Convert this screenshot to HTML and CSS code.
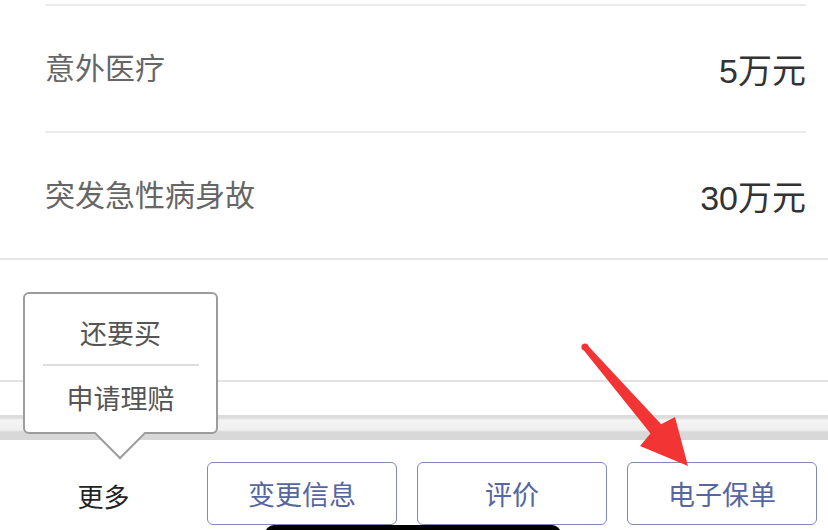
FILE: index.html
```html
<!DOCTYPE html>
<html lang="zh-CN">
<head>
<meta charset="utf-8">
<link rel="stylesheet" href="styles.css">
</head>
<body>
<div class="page">
  <section class="list">
    <div class="row">
      <span class="label">意外医疗</span>
      <span class="value">5万元</span>
    </div>
    <div class="row">
      <span class="label">突发急性病身故</span>
      <span class="value">30万元</span>
    </div>
  </section>
  <div class="blank"></div>
  <div class="blank2"></div>
  <div class="band"></div>
  <footer class="bar">
    <div class="more">更多</div>
    <div class="buttons">
      <button class="btn">变更信息</button>
      <button class="btn">评价</button>
      <button class="btn">电子保单</button>
    </div>
  </footer>

  <div class="popup">
    <div class="pop-item first">还要买</div>
    <div class="pop-divider"></div>
    <div class="pop-item second">申请理赔</div>
    <div class="pop-arrow"></div>
  </div>

  <div class="home"></div>

  <svg class="red-arrow" width="828" height="530" viewBox="0 0 828 530">
    <circle cx="585" cy="347" r="3.6" fill="#f23434"/>
    <polygon points="587.3,345 661.2,424.3 675,417 688,466 640,446 650.5,433.5 582.7,349" fill="#f23434"/>
  </svg>
</div>
</body>
</html>
```

FILE: styles.css
```css
* { box-sizing: border-box; }
html, body { margin: 0; padding: 0; background: #fff; }
body {
  width: 828px;
  height: 530px;
  overflow: hidden;
  font-family: "Noto Sans CJK SC", "Noto Sans", sans-serif;
}
.page {
  position: relative;
  width: 828px;
  height: 530px;
  display: flex;
  flex-direction: column;
}
.list {
  padding-top: 4px;
  border-bottom: 2px solid #e6e6e6;
}
.row {
  margin: 0 22px 0 45px;
  height: 127px;
  border-top: 2px solid #ebebeb;
  display: flex;
  align-items: center;
  justify-content: space-between;
}
.label {
  font-size: 30px;
  color: #666;
  margin-top: -6px;
}
.value {
  font-family: "Liberation Sans", "Noto Sans CJK SC", sans-serif;
  font-size: 34px;
  color: #333;
  margin-top: 0;
}
.blank {
  height: 122px;
  border-bottom: 2px solid #e2e2e2;
}
.blank2 { height: 33px; }
.band {
  height: 25px;
  background: linear-gradient(#dcdcdc 0, #dcdcdc 3px, #f4f4f4 5px, #efefef 15px, #d8d8d8 17px, #d8d8d8 25px);
}
.bar {
  flex: 1;
  display: flex;
  padding-top: 22px;
}
.more {
  width: 207px;
  text-align: center;
  font-size: 26px;
  color: #222;
  line-height: 63px;
  padding-top: 2px;
}
.buttons {
  display: flex;
  gap: 20px;
}
.btn {
  width: 190px;
  height: 63px;
  background: #fff;
  border: 1.5px solid #7d8ab6;
  border-radius: 6px;
  font-family: "Noto Sans CJK SC", sans-serif;
  font-size: 27px;
  color: #5566a0;
  padding: 0;
}
.popup {
  position: absolute;
  left: 23px;
  top: 292px;
  width: 195px;
  height: 142px;
  border: 2px solid #9c9c9c;
  border-radius: 6px;
  background: #fff;
  padding-top: 6px;
}
.pop-item {
  text-align: center;
  font-size: 27px;
  color: #555;
  display: flex;
  align-items: center;
  justify-content: center;
}
.pop-item.first { height: 64px; }
.pop-item.second { height: 62px; }
.pop-divider {
  height: 2px;
  margin: 0 17px 0 18px;
  background: #dedede;
}
.pop-arrow {
  position: absolute;
  left: 77px;
  bottom: -20px;
  width: 36px;
  height: 36px;
  background: #fff;
  border-right: 2px solid #9c9c9c;
  border-bottom: 2px solid #9c9c9c;
  transform: rotate(45deg);
}
.home {
  position: absolute;
  left: 265px;
  top: 525px;
  width: 296px;
  height: 12px;
  background: #000;
  border-radius: 9px 9px 0 0;
}
.red-arrow {
  position: absolute;
  left: 0;
  top: 0;
  pointer-events: none;
}
```
